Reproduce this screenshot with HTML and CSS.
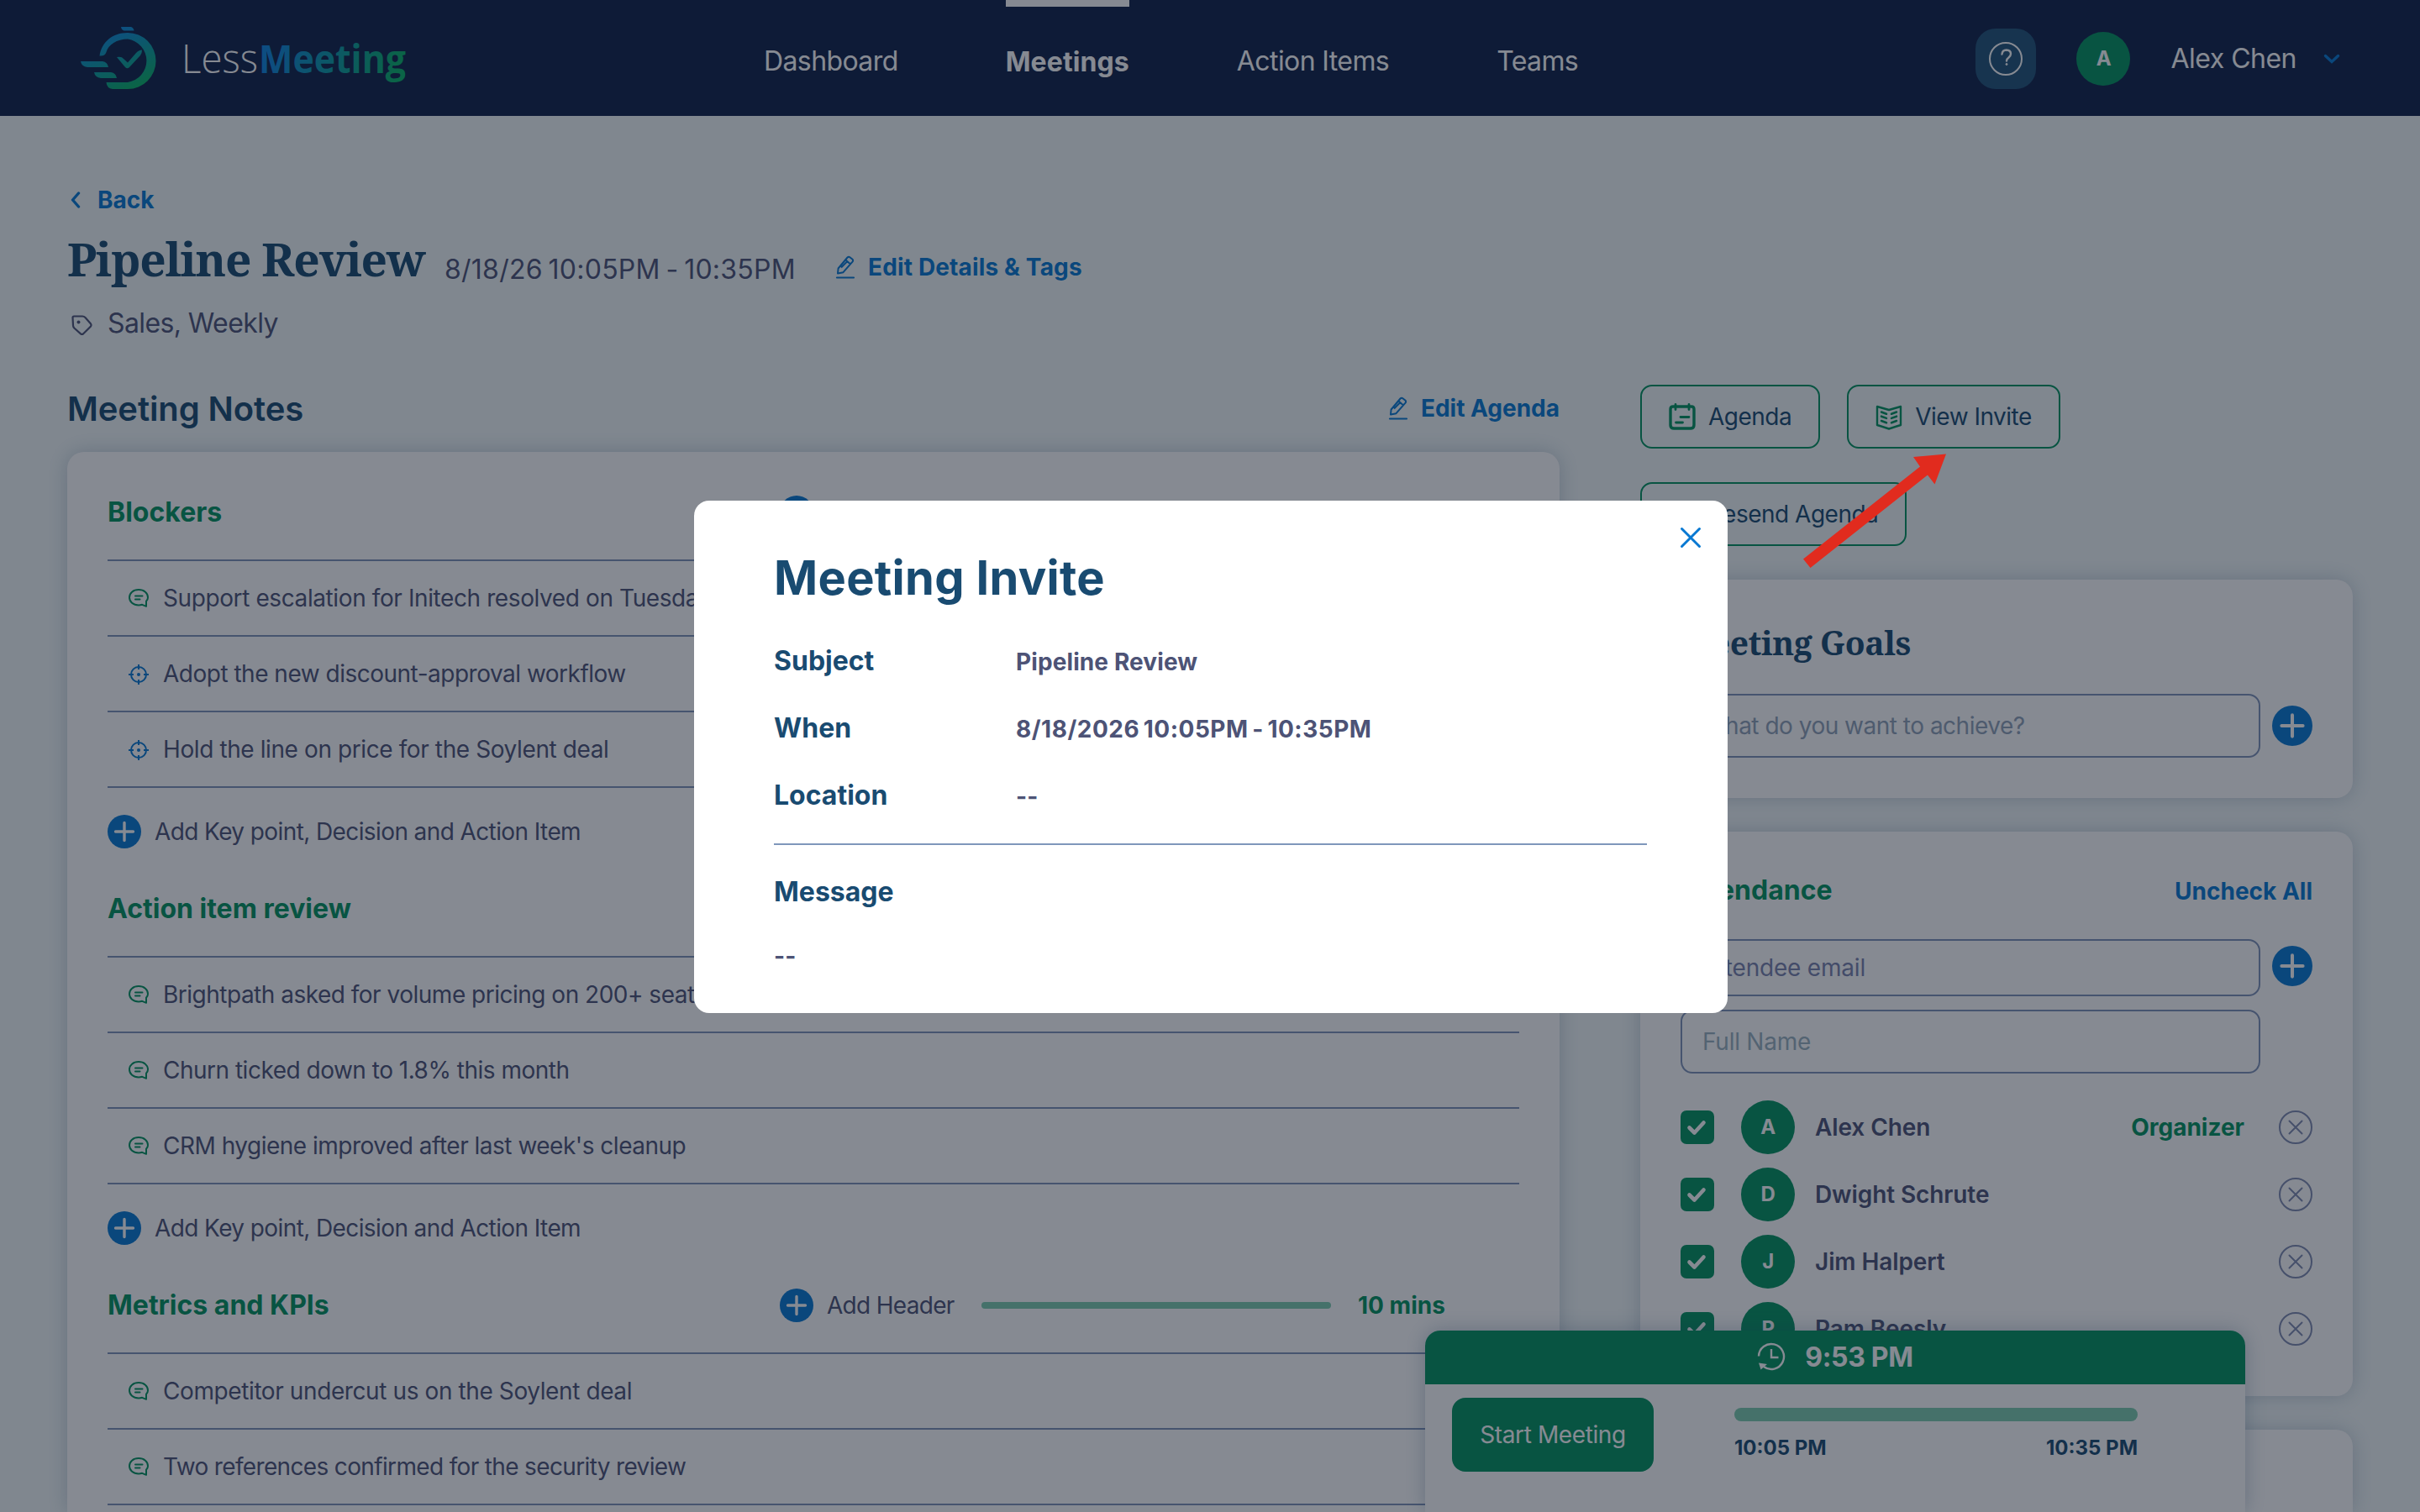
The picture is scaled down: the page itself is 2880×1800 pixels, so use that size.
FILE: index.html
```html
<!DOCTYPE html>
<html lang="en">
<head>
  <meta charset="UTF-8">
  <meta name="viewport" content="width=device-width, initial-scale=1.0">
  <title>Less Meeting</title>
  <link rel="stylesheet" href="styles.css">
</head>
<body>
  <!-- shared icons -->
  <svg class="sprite" width="0" height="0">
    <symbol id="icon-plus" viewBox="0 0 40 40">
      <circle cx="20" cy="20" r="20" fill="#0678d2"/>
      <path d="M20 9.500v21M9.500 20h21" fill="none" stroke="#fff" stroke-width="3.400" stroke-linecap="round"/>
    </symbol>
    <symbol id="icon-note" viewBox="0 0 26 26">
      <path d="M13 3C6.500 3 2 7 2 12.200C2 17.500 6.500 21.500 13 21.500C14.500 21.500 16 21.200 17.200 20.800L22 22.800V16.800C23.300 15.500 24 14 24 12.200C24 7 19.500 3 13 3Z" fill="none" stroke="#03935f" stroke-width="2" stroke-linejoin="round"/>
      <path d="M9 10.500h8.500M9 14.500h5.500" fill="none" stroke="#03935f" stroke-width="2" stroke-linecap="round"/>
    </symbol>
    <symbol id="icon-decision" viewBox="0 0 26 26">
      <circle cx="13" cy="14" r="9" fill="none" stroke="#0678d2" stroke-width="2"/>
      <circle cx="13" cy="14" r="2" fill="#0678d2"/>
      <path d="M13 2v6M13 20v6M1 14h6M19 14h6" stroke="#0678d2" stroke-width="2"/>
    </symbol>
    <symbol id="icon-edit" viewBox="0 0 24 28">
      <path d="M3 21.500L3.600 15.500L14.500 2.500Q16 1 17.700 2.400L20.300 4.600Q21.800 6 20.500 7.700L9.500 20.200Z M12.500 5.500L17.800 10.200M7 14.500L14 7.500" fill="none" stroke="#0678d2" stroke-width="2" stroke-linejoin="round"/>
      <path d="M2 26.500h20" stroke="#0678d2" stroke-width="2.200" stroke-linecap="round"/>
    </symbol>
    <symbol id="icon-remove" viewBox="0 0 40 40">
      <circle cx="20" cy="20" r="19" fill="none" stroke="#7f8bb0" stroke-width="2"/>
      <path d="M12.500 12.500l15 15M27.500 12.500l-15 15" stroke="#7f8bb0" stroke-width="2" stroke-linecap="round"/>
    </symbol>
    <symbol id="icon-check" viewBox="0 0 40 40">
      <rect width="40" height="40" rx="7" fill="#03935f"/>
      <path d="M10.500 20.500l6 6L27.500 14.500" fill="none" stroke="#fff" stroke-width="4.600" stroke-linecap="round" stroke-linejoin="round"/>
    </symbol>
  </svg>

  <header class="header">
    <svg class="logo" width="392" height="84" viewBox="94 28 392 84">
      <defs>
        <linearGradient id="markFill" gradientUnits="userSpaceOnUse" x1="130" y1="36" x2="160" y2="104">
          <stop offset="0" stop-color="#0d89e0"/>
          <stop offset="1" stop-color="#08b268"/>
        </linearGradient>
        <linearGradient id="wordFill" gradientUnits="userSpaceOnUse" x1="325" y1="55" x2="470" y2="100">
          <stop offset="0" stop-color="#0d84dc"/>
          <stop offset="1" stop-color="#08b268"/>
        </linearGradient>
      </defs>
      <path d="M144 32h12q3 1 3.500 4.500h-12q-3-1-3.500-4.500z" fill="url(#markFill)"/>
      <path d="M118.500 66.500C121 50 134 39 152 39A33.500 33.500 0 0 1 152 106H134Q127 105 126.500 98H152A26 26 0 0 0 152 46.500C139 46.500 129 53 126.500 62Q125 67 118.500 66.500z" fill="url(#markFill)"/>
      <path d="M96 73h26q6 1 7 7h-25q-7-1-8-7zM112 86h20q6 1 7 7h-19q-7-1-8-7z" fill="url(#markFill)"/>
      <path d="M139 68q6-1 8 2l5 4.500L162 63q3-3.500 7-3.500q0 4-2 6.500L154 80q-2.500 2.500-5 0z" fill="url(#markFill)"/>
      <text class="logo-less" x="216" y="86.500" textLength="91" lengthAdjust="spacingAndGlyphs">Less</text>
      <text class="logo-meeting" x="308" y="86.500" textLength="175" lengthAdjust="spacingAndGlyphs" fill="url(#wordFill)">Meeting</text>
    </svg>
    <nav class="nav">
      <a class="nav-link">Dashboard</a>
      <a class="nav-link active">Meetings</a>
      <a class="nav-link">Action Items</a>
      <a class="nav-link">Teams</a>
    </nav>
    <div class="user">
      <div class="help">
        <svg width="40" height="40" viewBox="0 0 40 40" fill="none" stroke="#fff">
          <circle cx="20" cy="20" r="19" stroke-width="2"/>
          <path d="M15.500 14.500Q16 9.500 20.700 9.500Q26 9.700 26 14Q26 16.500 23.500 18.500Q21 20.300 21 22.500" stroke-width="2.400" stroke-linecap="round"/>
          <circle cx="21" cy="26.500" r="1" fill="#fff" stroke-width="1"/>
        </svg>
      </div>
      <div class="avatar">A</div>
      <span class="user-name">Alex Chen</span>
      <svg class="user-chevron" width="20" height="12" viewBox="0 0 20 12"><path d="M2.500 2.500l7.500 7 7.500-7" fill="none" stroke="#0678d2" stroke-width="3.400" stroke-linecap="round"/></svg>
    </div>
  </header>

  <main class="page">
    <a class="link back">
      <svg width="14" height="20" viewBox="0 0 14 20"><path d="M10.500 2l-7 8 7 8" fill="none" stroke="#0678d2" stroke-width="3.400" stroke-linecap="round" stroke-linejoin="round"/></svg>
      Back
    </a>
    <div class="title-row">
      <h1>Pipeline Review</h1>
      <span class="date">8/18/26 10:05PM - 10:35PM</span>
      <a class="link edit-details"><svg width="24" height="28"><use href="#icon-edit"/></svg>Edit Details &amp; Tags</a>
    </div>
    <div class="tags">
      <svg width="26" height="26" viewBox="0 0 26 26"><path d="M2.500 4Q2.500 2.500 4 2.500H14Q16 2.600 17.500 4L24 11.500Q25 13 24 14.500L15 23.500Q13.500 24.500 12 23.300L4.300 16.500Q3 15 3 13.500Z" fill="none" stroke="#4d5376" stroke-width="2.200"/><circle cx="9.500" cy="9.500" r="2" fill="#4d5376"/></svg>
      Sales, Weekly
    </div>

    <div class="columns">
      <section class="left">
        <div class="notes-head">
          <h2>Meeting Notes</h2>
          <a class="link"><svg width="24" height="28"><use href="#icon-edit"/></svg>Edit Agenda</a>
        </div>
        <div class="card notes">
          <div class="topic">
            <div class="topic-head">
              <h3>Blockers</h3>
              <span class="add-header"><svg width="40" height="40"><use href="#icon-plus"/></svg></span>
            </div>
            <div class="note wide"><svg width="26" height="26"><use href="#icon-note"/></svg>Support escalation for Initech resolved on Tuesday</div>
            <div class="note"><svg width="26" height="26"><use href="#icon-decision"/></svg>Adopt the new discount-approval workflow</div>
            <div class="note wide"><svg width="26" height="26"><use href="#icon-decision"/></svg>Hold the line on price for the Soylent deal</div>
            <div class="add-note"><svg width="40" height="40"><use href="#icon-plus"/></svg>Add Key point, Decision and Action Item</div>
          </div>
          <div class="topic">
            <div class="topic-head">
              <h3>Action item review</h3>
            </div>
            <div class="note"><svg width="26" height="26"><use href="#icon-note"/></svg>Brightpath asked for volume pricing on 200+ seats</div>
            <div class="note"><svg width="26" height="26"><use href="#icon-note"/></svg>Churn ticked down to 1.8% this month</div>
            <div class="note"><svg width="26" height="26"><use href="#icon-note"/></svg>CRM hygiene improved after last week's cleanup</div>
            <div class="add-note"><svg width="40" height="40"><use href="#icon-plus"/></svg>Add Key point, Decision and Action Item</div>
          </div>
          <div class="topic">
            <div class="topic-head">
              <h3>Metrics and KPIs</h3>
              <span class="add-header"><svg width="40" height="40"><use href="#icon-plus"/></svg>Add Header</span>
              <div class="bar"></div>
              <b class="mins">10 mins</b>
            </div>
            <div class="note wide"><svg width="26" height="26"><use href="#icon-note"/></svg>Competitor undercut us on the Soylent deal</div>
            <div class="note tight"><svg width="26" height="26"><use href="#icon-note"/></svg>Two references confirmed for the security review</div>
          </div>
        </div>
      </section>

      <aside class="right">
        <div class="actions">
          <button class="btn">
            <svg width="32" height="32" viewBox="0 0 32 32" fill="none" stroke="#03935f" stroke-width="3.400" stroke-linecap="round" stroke-linejoin="round"><path d="M5 4H27Q30 4 30 7V26Q30 30 26 30H6Q2 30 2 26V7Q2 4 5 4Z"/><path d="M8 1.500v6M24 1.500v6M14 16.500h10M8.500 23h8" stroke-width="2.800"/></svg>
            Agenda
          </button>
          <button class="btn">
            <svg width="32" height="32" viewBox="0 0 32 32" fill="none" stroke="#03935f" stroke-width="2.400" stroke-linejoin="round"><path d="M2 4L16 8L30 4V26L16 30.500L2 26Z"/><path d="M7 10.500l6 2.200M7 15.700l6 2.200M7 21l6 2.200M25 10.500l-6 2.200M25 15.700l-6 2.200M25 21l-6 2.200" stroke-width="2.600" stroke-linecap="round"/></svg>
            View Invite
          </button>
          <button class="btn">
            <svg width="32" height="32" viewBox="0 0 32 32" fill="none" stroke="#03935f" stroke-width="2.600" stroke-linejoin="round"><path d="M3 14L29 3L21 29L14 18Z"/></svg>
            Resend Agenda
          </button>
        </div>

        <div class="card goals">
          <h2 class="serif">Meeting Goals</h2>
          <div class="field-row">
            <div class="field goal-field">What do you want to achieve?</div>
            <svg width="48" height="48"><use href="#icon-plus"/></svg>
          </div>
        </div>

        <div class="card attendance">
          <div class="attendance-head">
            <h3>Attendance</h3>
            <a class="link">Uncheck All</a>
          </div>
          <div class="field-row">
            <div class="field email-field">Attendee email</div>
            <svg class="add-attendee" width="48" height="48"><use href="#icon-plus"/></svg>
          </div>
          <div class="field name-field">Full Name</div>
          <div class="people">
            <div class="person">
              <svg width="40" height="40"><use href="#icon-check"/></svg>
              <div class="avatar">A</div>
              <span class="person-name">Alex Chen</span>
              <b class="role">Organizer</b>
              <svg width="40" height="40"><use href="#icon-remove"/></svg>
            </div>
            <div class="person">
              <svg width="40" height="40"><use href="#icon-check"/></svg>
              <div class="avatar">D</div>
              <span class="person-name">Dwight Schrute</span>
              <svg width="40" height="40"><use href="#icon-remove"/></svg>
            </div>
            <div class="person">
              <svg width="40" height="40"><use href="#icon-check"/></svg>
              <div class="avatar">J</div>
              <span class="person-name">Jim Halpert</span>
              <svg width="40" height="40"><use href="#icon-remove"/></svg>
            </div>
            <div class="person">
              <svg width="40" height="40"><use href="#icon-check"/></svg>
              <div class="avatar">P</div>
              <span class="person-name">Pam Beesly</span>
              <svg width="40" height="40"><use href="#icon-remove"/></svg>
            </div>
          </div>
        </div>

        <div class="card more"></div>
      </aside>
    </div>
  </main>

  <!-- floating meeting timer -->
  <div class="timer">
    <div class="timer-head">
      <svg width="34" height="34" viewBox="0 0 34 34" fill="none" stroke="#fff" stroke-width="2.400"><path d="M2 16.500A15 15 0 1 1 8 29"/><path d="M17 8v10h8.500"/><path d="M2 24.500l10 1.500-7.500 6.500z" fill="#fff" stroke="none"/></svg>
      9:53 PM
    </div>
    <div class="timer-body">
      <button class="start">Start Meeting</button>
      <div class="timeline">
        <div class="timeline-bar"></div>
        <div class="timeline-times"><span>10:05 PM</span><span>10:35 PM</span></div>
      </div>
    </div>
  </div>

  <div class="overlay">
    <div class="modal">
      <svg class="close" width="26" height="26" viewBox="0 0 26 26"><path d="M2.500 2.500l21 21M23.500 2.500l-21 21" stroke="#0678d2" stroke-width="3" stroke-linecap="round"/></svg>
      <h1>Meeting Invite</h1>
      <div class="modal-row"><label>Subject</label><span>Pipeline Review</span></div>
      <div class="modal-row"><label>When</label><span class="when">8/18/2026 10:05PM - 10:35PM</span></div>
      <div class="modal-row"><label>Location</label><span>--</span></div>
      <div class="message">
        <label>Message</label>
        <span>--</span>
      </div>
    </div>
  </div>

  <svg class="pointer" width="174" height="140" viewBox="2144 538 174 140"><path d="M2146 665.500L2285 555.500L2277 544L2316 540.500L2302.500 576.500L2294 565.500L2154.500 676Z" fill="#e12b1e"/></svg>
</body>
</html>
```
FILE: styles.css
```css
* {
  box-sizing: border-box;
}

body {
  margin: 0;
  width: 2880px;
  height: 1800px;
  overflow: hidden;
  position: relative;
  background: #f3f9f9;
  color: #4d5376;
  font-family: Inter, "Liberation Sans", sans-serif;
  font-size: 28px;
  letter-spacing: -0.5px;
  white-space: nowrap;
}

h1, h2, h3 {
  margin: 0;
  color: #194b71;
}

h3 {
  color: #03935f;
  font-size: 32px;
  line-height: 38px;
  letter-spacing: 0;
}

svg {
  flex: none;
}

.sprite {
  position: absolute;
}

/* header */
.header {
  display: flex;
  height: 138px;
  padding: 0 95px 0 94px;
  background: #0f2149;
  color: #fff;
  font-size: 32px;
}

.logo {
  margin-top: 28px;
}

.logo-less {
  font: 300 47px "Open Sans", "Noto Sans", sans-serif;
  fill: #fff;
  letter-spacing: 0;
}

.logo-meeting {
  font: 700 47px "Open Sans", "Noto Sans", sans-serif;
  letter-spacing: 0;
}

.nav {
  display: flex;
  gap: 128px;
  margin-left: 423px;
  letter-spacing: -0.6px;
}

.nav-link {
  padding-top: 7px;
  line-height: 131px;
}

.nav-link.active {
  padding-top: 0;
  border-top: 8px solid #fff;
  font-weight: 700;
  letter-spacing: 0.1px;
}

.user {
  display: flex;
  align-items: center;
  margin-left: auto;
  padding-top: 2px;
}

.help {
  display: flex;
  align-items: center;
  justify-content: center;
  width: 72px;
  height: 72px;
  margin-right: 48px;
  border-radius: 24px;
  background: #215379;
}

.avatar {
  width: 64px;
  height: 64px;
  border-radius: 50%;
  background: #03935f;
  color: #fff;
  font-size: 24px;
  font-weight: 700;
  line-height: 64px;
  text-align: center;
}

.user-name {
  margin-left: 48px;
  padding-bottom: 2px;
}

.user-chevron {
  margin-left: 32px;
}

/* page heading */
.page {
  padding: 80px 80px 0;
}

.link {
  display: flex;
  align-items: center;
  color: #0678d2;
  font-weight: 700;
  line-height: 40px;
  letter-spacing: 0;
}

.link svg {
  margin-right: 15px;
}

.back {
  gap: 4px;
}

.back svg {
  margin-left: 3px;
}

.title-row {
  display: flex;
  align-items: flex-start;
  height: 64px;
  margin-top: 19px;
}

.title-row h1,
.serif {
  font-family: "Noto Serif", "DejaVu Serif", serif;
}

.title-row h1 {
  width: 449px;
  font-size: 55px;
  line-height: 62px;
  letter-spacing: -1.25px;
}

.date {
  width: 465px;
  padding-top: 24px;
  font-size: 32px;
  line-height: 40px;
  letter-spacing: 0.25px;
  word-spacing: -2.5px;
}

.edit-details {
  padding-top: 21px;
  letter-spacing: 0.15px;
}

.tags {
  display: flex;
  align-items: center;
  gap: 18px;
  margin-top: 24px;
  padding-left: 4px;
  font-size: 32px;
  line-height: 40px;
  letter-spacing: -0.6px;
}

.tags svg {
  margin-top: 4px;
}

.columns {
  display: grid;
  grid-template-columns: 1776px 848px;
  gap: 96px;
  margin-top: 53px;
}

.card {
  background: #fff;
  border-radius: 20px;
  box-shadow: 0 0 24px rgba(40, 80, 120, 0.25);
}

/* notes */
.notes-head {
  display: flex;
  align-items: center;
  justify-content: space-between;
  height: 80px;
  padding-bottom: 24px;
}

.notes-head h2 {
  font-size: 40px;
  font-weight: 600;
  letter-spacing: -0.1px;
}

.notes {
  height: 1262px;
  padding: 16px 48px 0;
  border-radius: 20px 20px 0 0;
}

.topic-head {
  display: flex;
  align-items: center;
  height: 114px;
  border-bottom: 2px solid #7f93b8;
}

.topic-head h3 {
  width: 800px;
}

.add-header {
  display: flex;
  align-items: center;
  gap: 16px;
  width: 240px;
  letter-spacing: -0.7px;
}

.bar {
  width: 416px;
  height: 8px;
  margin-right: 32px;
  border-radius: 4px;
  background: #7dcdaf;
}

.mins {
  color: #03935f;
  letter-spacing: 0;
}

.note {
  display: flex;
  align-items: center;
  gap: 16px;
  height: 90px;
  padding-left: 24px;
  border-bottom: 2px solid #7f93b8;
}

.note.wide {
  letter-spacing: -0.4px;
}

.note.tight {
  letter-spacing: -0.65px;
}

.add-note {
  display: flex;
  align-items: center;
  gap: 16px;
  height: 88px;
  padding-top: 16px;
  letter-spacing: -0.6px;
}

/* right column */
.actions {
  display: flex;
  flex-wrap: wrap;
  gap: 40px 32px;
  margin-bottom: 40px;
}

.btn {
  display: flex;
  align-items: center;
  gap: 15px;
  height: 76px;
  padding: 0 32px;
  border: 2px solid #03935f;
  border-radius: 14px;
  background: none;
  color: #194b71;
  font: inherit;
  letter-spacing: -0.5px;
}

.goals {
  height: 260px;
  padding: 51px 48px 0;
  margin-bottom: 40px;
}

.serif {
  margin-bottom: 37px;
  font-size: 39px;
  line-height: 48px;
  letter-spacing: -0.4px;
}

.field-row {
  display: flex;
  align-items: center;
  gap: 14px;
}

.field {
  width: 690px;
  height: 76px;
  padding-left: 24px;
  border: 2px solid #7f93b8;
  border-radius: 14px;
  line-height: 72px;
}

.goal-field {
  color: #8fa1b7;
}

.attendance {
  height: 672px;
  padding: 51px 48px 0;
  margin-bottom: 40px;
}

.attendance-head {
  display: flex;
  justify-content: space-between;
  height: 40px;
  margin-bottom: 37px;
}

.attendance-head .link {
  line-height: 42px;
}

.email-field {
  height: 68px;
  line-height: 64px;
  color: #7982ad;
  letter-spacing: -0.2px;
}

.add-attendee {
  margin-bottom: 4px;
}

.name-field {
  margin-top: 16px;
  color: #99b1bf;
  letter-spacing: -0.25px;
}

.people {
  margin-top: 24px;
}

.person {
  display: flex;
  align-items: center;
  height: 80px;
}

.person .avatar {
  margin: 0 24px 0 32px;
}

.person-name {
  flex: 1;
  font-weight: 600;
  letter-spacing: -0.1px;
}

.role {
  margin-right: 41px;
  color: #03935f;
  letter-spacing: 0;
}

.more {
  height: 98px;
  border-radius: 20px 20px 0 0;
}

/* timer */
.timer {
  position: absolute;
  left: 1696px;
  top: 1584px;
  width: 976px;
  height: 216px;
  border-radius: 18px 18px 0 0;
  background: #fff;
  box-shadow: 0 0 24px rgba(40, 80, 120, 0.3);
  overflow: hidden;
}

.timer-head {
  display: flex;
  align-items: center;
  justify-content: center;
  gap: 23px;
  height: 64px;
  padding-bottom: 2px;
  background: #03935f;
  color: #fff;
  font-size: 32px;
  font-weight: 700;
  letter-spacing: -0.3px;
}

.timer-body {
  display: flex;
  gap: 96px;
  padding: 16px 32px;
}

.start {
  width: 240px;
  height: 88px;
  border: 0;
  border-radius: 16px;
  background: #03935f;
  color: #fff;
  font: inherit;
  letter-spacing: -0.4px;
}

.timeline {
  width: 480px;
  padding-top: 12px;
}

.timeline-bar {
  height: 16px;
  margin-bottom: 16px;
  border-radius: 8px;
  background: #7dcdaf;
}

.timeline-times {
  display: flex;
  justify-content: space-between;
  color: #194b71;
  font-size: 24px;
  font-weight: 700;
  line-height: 32px;
  letter-spacing: 0;
}

/* invite modal */
.overlay {
  position: absolute;
  inset: 0;
  padding-top: 596px;
  background: rgba(13, 21, 37, 0.5);
}

.modal {
  position: relative;
  width: 1230px;
  height: 610px;
  margin-left: 826px;
  padding: 60px 96px 0 95px;
  border-radius: 18px;
  background: #fff;
}

.close {
  position: absolute;
  top: 31px;
  right: 31px;
}

.modal h1 {
  margin-bottom: 26px;
  font-size: 56px;
  line-height: 64px;
  letter-spacing: 0.3px;
}

.modal-row {
  display: flex;
  align-items: center;
  height: 80px;
}

.modal label {
  width: 288px;
  color: #194b71;
  font-size: 32px;
  font-weight: 700;
  letter-spacing: 0;
}

.modal span {
  padding-top: 3px;
  font-weight: 700;
  letter-spacing: 0.1px;
}

.modal .when {
  letter-spacing: 0.5px;
  word-spacing: -2.5px;
}

.message {
  display: flex;
  flex-direction: column;
  gap: 33px;
  margin-top: 18px;
  padding-top: 36px;
  border-top: 2px solid #7f97bb;
  line-height: 40px;
}

.pointer {
  position: absolute;
  left: 2144px;
  top: 538px;
}
```
